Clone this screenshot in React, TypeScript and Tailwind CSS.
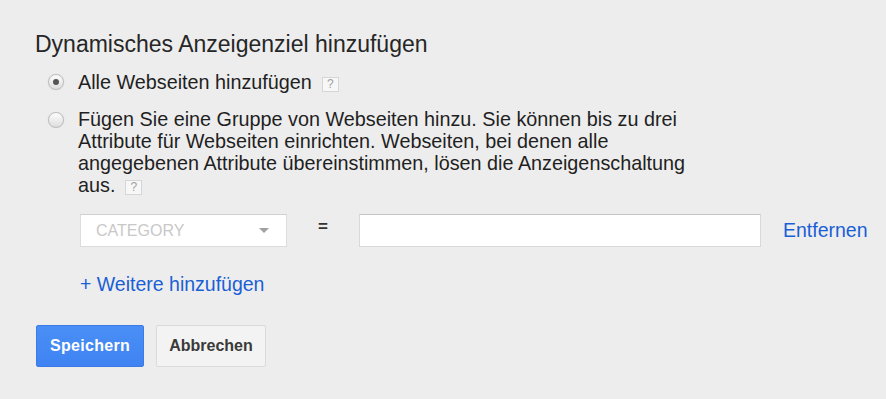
import React from "react";

function Help() {
  return (
    <span className="inline-flex items-center justify-center w-[17px] h-[15px] border border-[#d6d6d6] bg-[#f7f7f7] text-[#a0a0a0] text-[12px] leading-none align-[1px] ml-[10px] font-['Liberation_Sans',Arial,sans-serif]">
      ?
    </span>
  );
}

function Radio({ checked }: { checked?: boolean }) {
  return (
    <span className="flex items-center justify-center w-[16px] h-[16px] rounded-full border border-[#bdbdbd] bg-gradient-to-b from-[#fdfdfd] to-[#dedede] shadow-[0_0_1px_rgba(0,0,0,0.2)]">
      {checked && <span className="w-[6px] h-[6px] rounded-full bg-[#555]" />}
    </span>
  );
}

export default function App() {
  return (
    <div className="w-[886px] h-[399px] bg-[#ededed] font-['Liberation_Sans',Arial,sans-serif] text-[#1f1f1f] overflow-hidden">
      <div className="pl-[35px] pt-[31px]">
        <h1 className="text-[23px] leading-[26px] text-[#262626] font-normal">
          Dynamisches Anzeigenziel hinzufügen
        </h1>

        <div className="mt-[14px] flex items-start text-[19.8px] leading-[22px]">
          <div className="w-[43px] shrink-0 flex justify-end pr-[14px] pt-[3px]">
            <Radio checked />
          </div>
          <div>
            Alle Webseiten hinzufügen
            <Help />
          </div>
        </div>

        <div className="mt-[15px] flex items-start text-[19.8px] leading-[22px]">
          <div className="w-[43px] shrink-0 flex justify-end pr-[14px] pt-[4px]">
            <Radio />
          </div>
          <div className="shrink-0">
            Fügen Sie eine Gruppe von Webseiten hinzu. Sie können bis zu drei
            <br />
            Attribute für Webseiten einrichten. Webseiten, bei denen alle
            <br />
            angegebenen Attribute übereinstimmen, lösen die Anzeigenschaltung
            <br />
            aus.
            <Help />

            <div className="mt-[18px] ml-[2px] flex items-start">
              <div className="w-[207px] h-[33px] shrink-0 bg-white border border-[#dcdcdc] border-t-[#d0d0d0] flex items-center pl-[15px] pr-[17px]">
                <span className="flex-1 text-[16px] text-[#c8c8c8]">CATEGORY</span>
                <svg width="10" height="5" viewBox="0 0 10 5">
                  <polygon points="0,0 10,0 5,5" fill="#a0a0a0" />
                </svg>
              </div>
              <div className="w-[72px] shrink-0 flex justify-center pt-[3px] text-[17px] font-bold leading-[20px] text-[#333]">
                =
              </div>
              <div className="w-[402px] h-[33px] bg-white border border-[#d9d9d9] border-t-[#c4c4c4] shrink-0" />
              <a className="ml-[22px] mt-[5px] text-[19.5px] text-[#1a5fd6] whitespace-nowrap">Entfernen</a>
            </div>

            <div className="mt-[26px] ml-[2px] text-[19.5px] text-[#1a5fd6]">+ Weitere hinzufügen</div>
          </div>
        </div>

        <div className="mt-[30px] ml-[1px] flex gap-[12px]">
          <button className="w-[108px] h-[42px] rounded-[2px] bg-gradient-to-b from-[#4a8ff5] to-[#3f83f3] border border-[#3c7ae8] text-white text-[16px] font-bold tracking-[0.3px]">
            Speichern
          </button>
          <button className="w-[110px] h-[42px] rounded-[2px] bg-[#f3f3f3] border border-[#dadada] text-[#3a3a3a] text-[16px] font-bold">
            Abbrechen
          </button>
        </div>
      </div>
    </div>
  );
}
